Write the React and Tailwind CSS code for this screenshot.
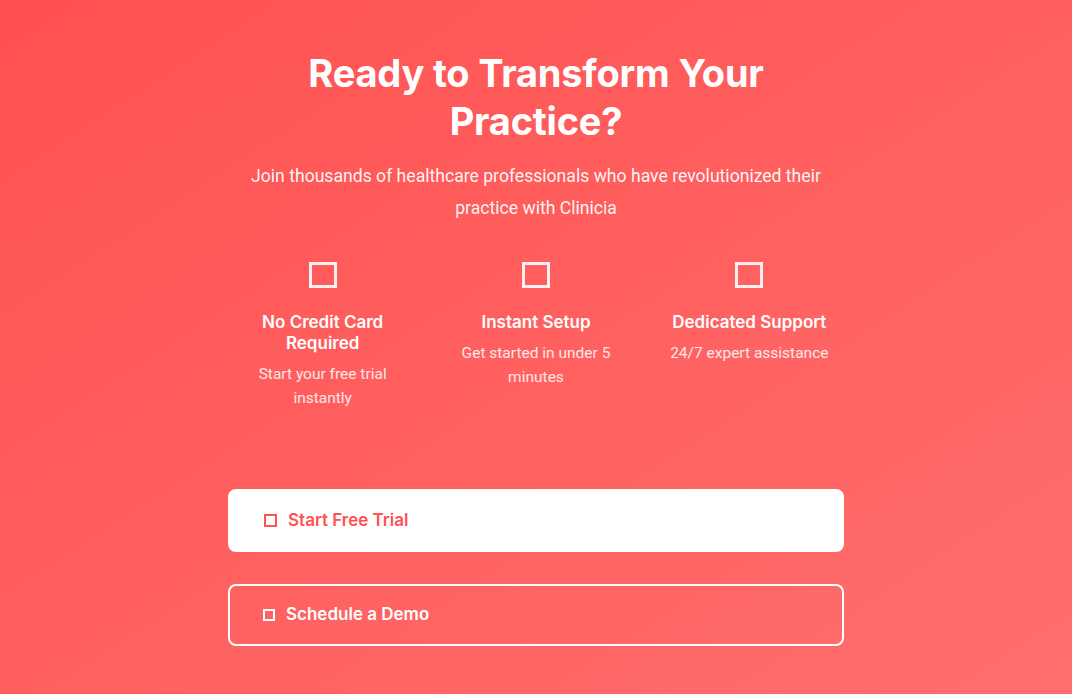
import React from "react";

const features = [
  { title: "No Credit Card Required", desc: "Start your free trial instantly" },
  { title: "Instant Setup", desc: "Get started in under 5 minutes" },
  { title: "Dedicated Support", desc: "24/7 expert assistance" },
];

export default function App() {
  return (
    <div className="min-h-[694px] w-full bg-gradient-to-br from-[#ff5050] to-[#ff6e6e] text-white font-['Roboto',sans-serif]">
      <div className="mx-auto flex flex-col items-center pt-[49px] pb-12">
        <h2 className="max-w-[512px] text-center font-['Inter',sans-serif] text-[38px] font-bold leading-[48px] tracking-[-0.2px]">
          Ready to Transform Your Practice?
        </h2>
        <p className="mt-[15px] max-w-[584px] text-center text-[17.6px] leading-[32px] text-white/95">
          Join thousands of healthcare professionals who have revolutionized their practice with Clinicia
        </p>
        <div className="mt-[38px] grid w-[640px] grid-cols-3">
          {features.map((f) => (
            <div key={f.title} className="flex flex-col items-center px-6 text-center">
              <div className="h-[26px] w-[28px] border-[3px] border-white/90" />
              <h3 className="mt-[24px] font-['Inter',sans-serif] text-[17px] font-semibold leading-[21px]">
                {f.title}
              </h3>
              <p className="mt-[8px] text-[15.5px] leading-[24px] text-white/85">{f.desc}</p>
            </div>
          ))}
        </div>
        <div className="mt-[79px] flex w-[616px] flex-col gap-8">
          <button className="flex h-[63px] items-center gap-[11px] rounded-lg bg-white pl-[36px] font-['Inter',sans-serif] text-[17px] font-semibold text-[#ff5252]">
            <span className="h-[13px] w-[13px] border-2 border-[#ff5252]" />
            Start Free Trial
          </button>
          <button className="flex h-[62px] items-center gap-[11px] rounded-lg border-2 border-white pl-[33px] font-['Inter',sans-serif] text-[17px] font-semibold text-white">
            <span className="h-[12px] w-[12px] border-2 border-white" />
            Schedule a Demo
          </button>
        </div>
      </div>
    </div>
  );
}
